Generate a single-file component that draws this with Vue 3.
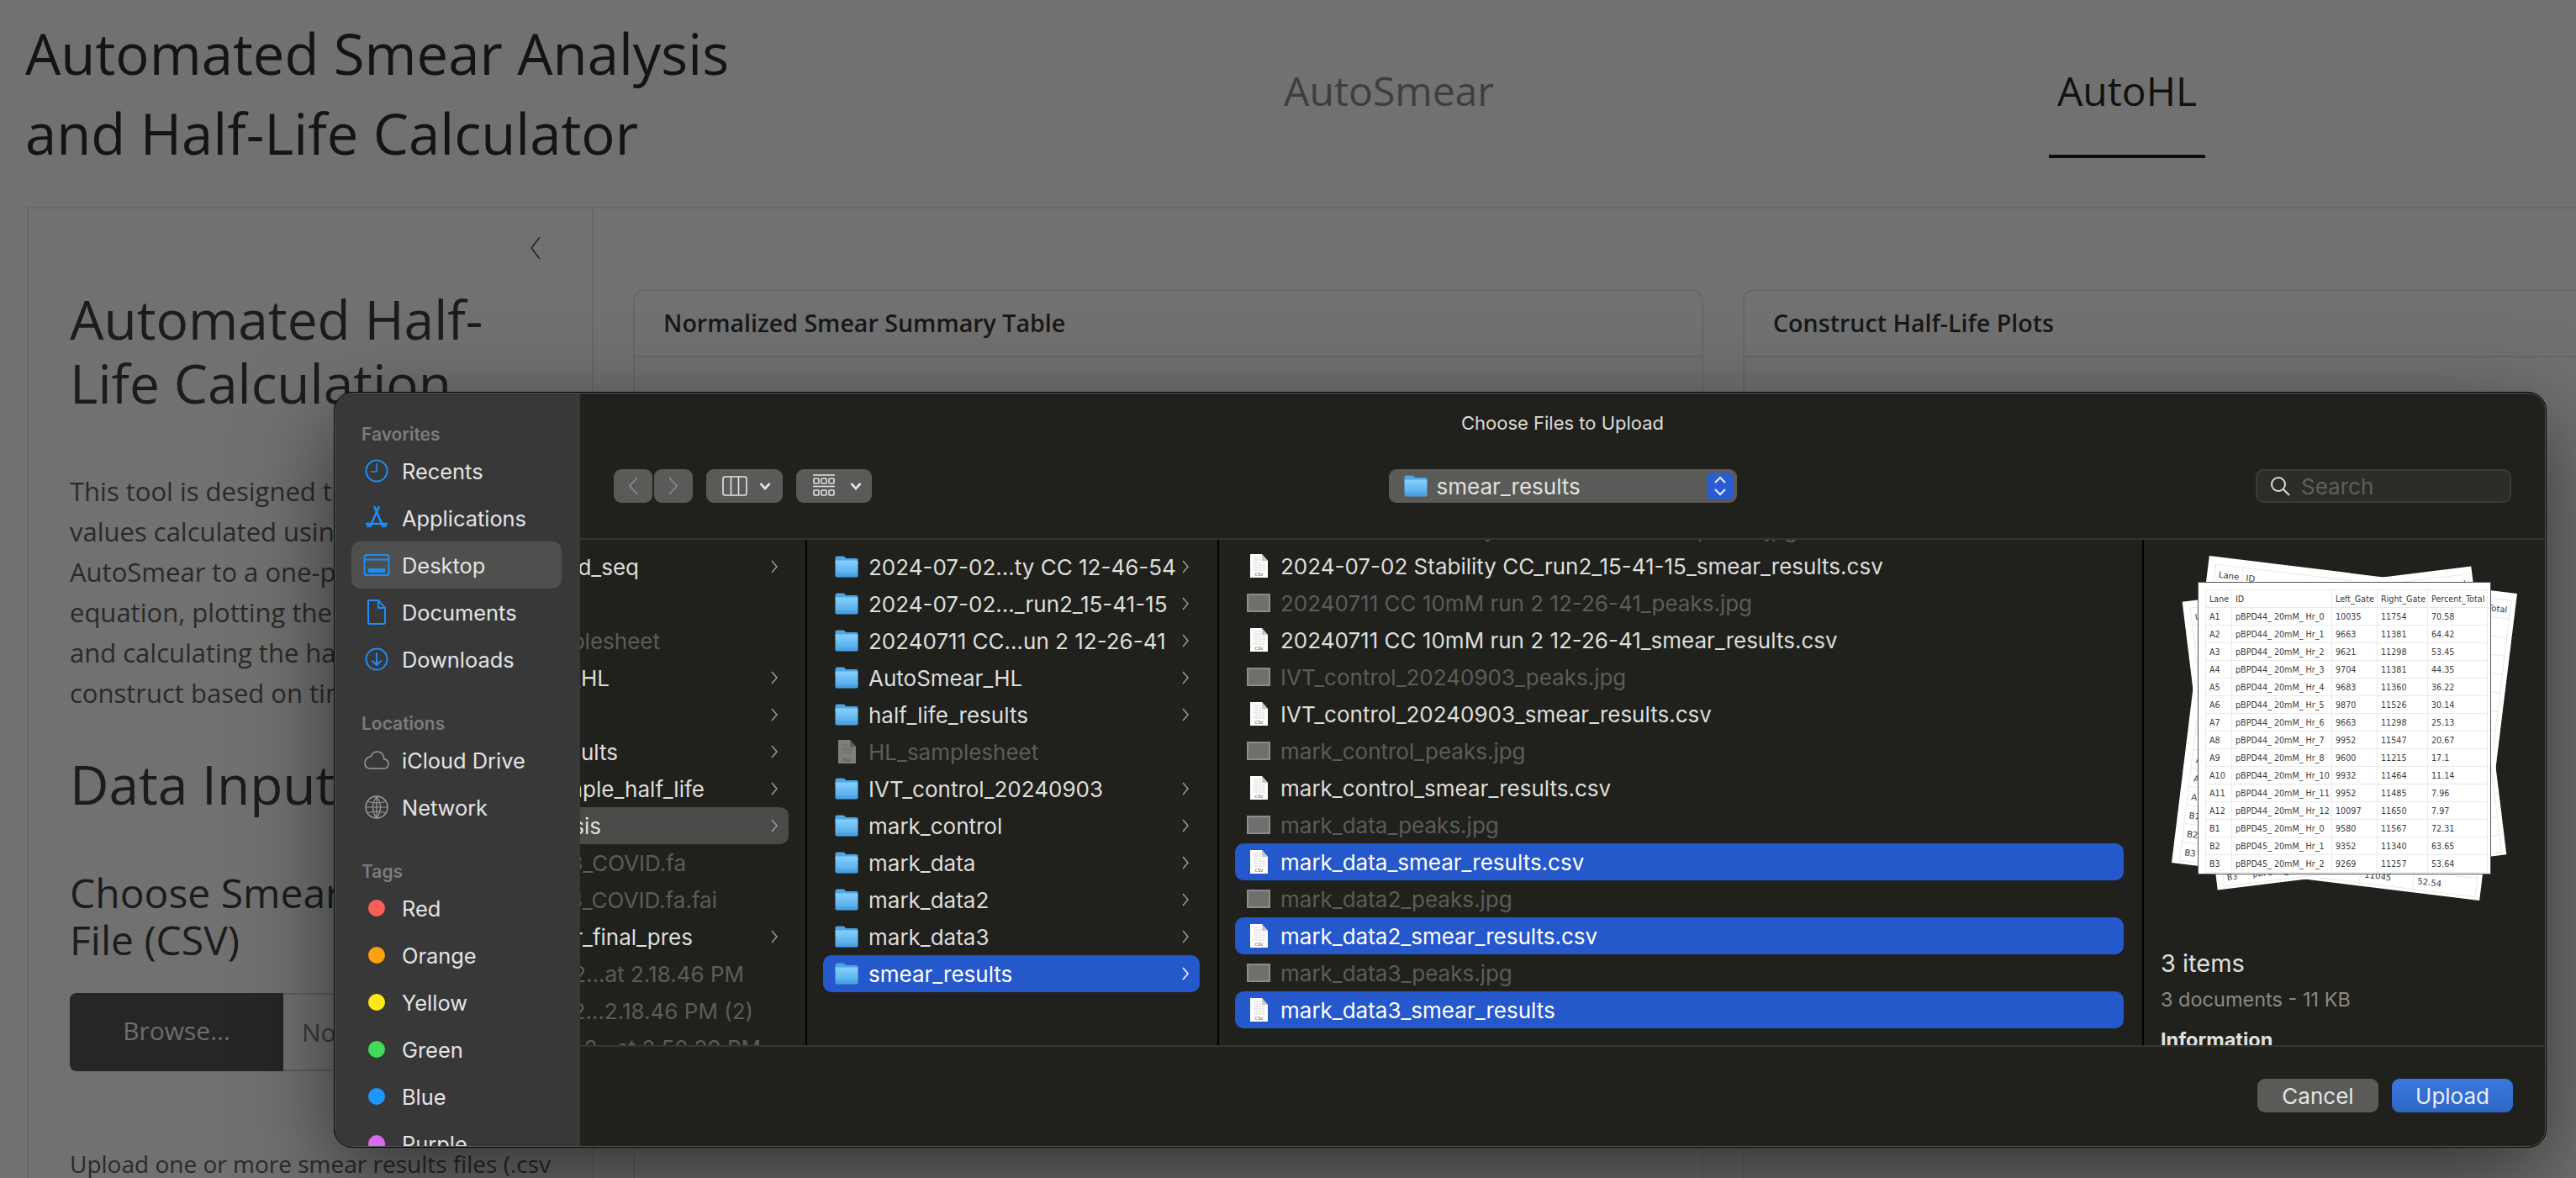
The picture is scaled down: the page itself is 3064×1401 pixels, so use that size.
<template>
  <div class="page">
    <svg class="defs" aria-hidden="true">
      <defs>
        <linearGradient id="fold" x1="0" y1="0" x2="0" y2="1">
          <stop offset="0" stop-color="#86cffb" />
          <stop offset="1" stop-color="#4aa6e8" />
        </linearGradient>
        <symbol id="folder" viewBox="0 0 28 26">
          <path d="M.5 3Q.5 .5 3 .5H9.5Q11 .5 12 1.6L13 3H25.5Q27.5 3 27.5 5V8H.5Z" fill="#4fa6e6" />
          <path d="M.5 5.5H25.5Q27.5 5.5 27.5 7.5V23.5Q27.5 25.5 25.5 25.5H2.5Q.5 25.5 .5 23.5Z" fill="url(#fold)" />
          <path d="M.5 22H27.5M.5 24H27.5" stroke="#3d8fd0" stroke-width=".6" />
        </symbol>
        <symbol id="csv" viewBox="0 0 23 28">
          <path d="M1 0H15L22 8V28H1Z" fill="#fff" />
          <path d="M15 0L22 8H15Z" fill="#c8c8c8" />
          <path d="M4 4H14M4 7H14M4 10H19M4 13H19M4 16H19M4 19H19M8 3V20M13 3V20M17 9V20" stroke="#dcdcdc" stroke-width=".8" />
          <text x="11.5" y="26" text-anchor="middle" class="ic-label">CSV</text>
        </symbol>
        <symbol id="tsv" viewBox="0 0 23 28">
          <path d="M1 0H15L22 8V28H1Z" fill="#7e7e7c" />
          <path d="M15 0L22 8H15Z" fill="#5c5c5a" />
          <path d="M4 6H13M4 9H19M4 12H19M4 15H19" stroke="#666" stroke-width=".8" />
          <text x="11.5" y="26" text-anchor="middle" class="ic-label">TSV</text>
        </symbol>
        <symbol id="jpg" viewBox="0 0 28 22">
          <rect width="28" height="22" fill="#8c8c8a" />
          <rect x="2" y="2" width="24" height="18" fill="#6f6f6d" />
        </symbol>
      </defs>
    </svg>

    <header class="top">
      <h1>Automated Smear Analysis<br />and Half-Life Calculator</h1>
      <nav class="tabs">
        <a class="tab">AutoSmear</a>
        <a class="tab active"><span>AutoHL</span></a>
      </nav>
    </header>

    <section class="shell">
      <aside class="side">
        <div class="collapse">
          <svg width="16" height="28" viewBox="0 0 16 28"><path d="M13 1L3 14L13 27" fill="none" stroke="#262626" stroke-width="1.6" /></svg>
        </div>
        <h2>Automated Half-Life Calculation</h2>
        <p class="lead">This tool is designed to fit half-life<br />values calculated using output from<br />AutoSmear to a one-phase decay<br />equation, plotting the decay curves<br />and calculating the half-life of each<br />construct based on time points.</p>
        <h2 class="data">Data Input</h2>
        <h3>Choose Smear Results<br />File (CSV)</h3>
        <div class="file">
          <span class="browse">Browse...</span>
          <span class="none">No file selected</span>
        </div>
        <p class="hint">Upload one or more smear results files (.csv</p>
      </aside>
      <div class="cards">
        <div class="card"><div class="card-head">Normalized Smear Summary Table</div></div>
        <div class="card"><div class="card-head">Construct Half-Life Plots</div></div>
      </div>
    </section>

    <div class="dialog">
      <aside class="places">
        <template v-for="g in places" :key="g.title">
          <div class="group">{{ g.title }}</div>
          <div v-for="p in g.items" :key="p.name" class="place" :class="{ on: p.name === 'Desktop' }">
            <span v-if="p.dot" class="dot" :style="{ background: p.dot }"></span>
            <svg v-else class="pic" :class="{ grey: g.title === 'Locations' }" viewBox="0 0 32 32" fill="none" stroke="currentColor" stroke-width="2">
              <template v-if="p.name === 'Recents'"><circle cx="16" cy="16" r="12.5" /><path d="M16 7V17H9" stroke-width="1.6" /></template>
              <template v-else-if="p.name === 'Applications'"><path d="M13 2L24 27M19 2L8 27M3 23H29" stroke-width="2.6" /><path d="M5 27L7 23M27 27L25 23" stroke-width="2.6" /></template>
              <template v-else-if="p.name === 'Desktop'"><rect x="1.5" y="4" width="29" height="24" rx="2.5" /><path d="M2 9.5H30" /><rect x="6" y="20" width="20" height="5" rx=".5" fill="currentColor" stroke="none" /></template>
              <template v-else-if="p.name === 'Documents'"><path d="M6 2H18L26 11V28Q26 30 24 30H8Q6 30 6 28Z" /><path d="M18 2V11H26" /></template>
              <template v-else-if="p.name === 'Downloads'"><circle cx="16" cy="16" r="12.5" /><path d="M16 8V23M10.5 17.5L16 23L21.5 17.5" /></template>
              <template v-else-if="p.name === 'iCloud Drive'"><path d="M9 26H24Q30 26 30 20.5Q30 15.5 25 15Q24 6 16.5 6Q11 6 9.5 11.5Q2 13 2 19.5Q2 26 9 26Z" stroke-width="1.5" /></template>
              <template v-else><circle cx="16" cy="16" r="13" stroke-width="1.5" /><path d="M16 3V29M3 16H29M5 9Q16 13 27 9M5 23Q16 19 27 23M16 3Q7 16 16 29M16 3Q25 16 16 29" stroke-width="1.2" /></template>
            </svg>
            <span>{{ p.name }}</span>
          </div>
        </template>
      </aside>

      <div class="main">
        <div class="toolbar">
          <div class="title">Choose Files to Upload</div>
          <div class="controls">
            <div class="tools">
              <div class="nav-pair">
                <span class="tbtn nav"><svg width="14" height="24" viewBox="0 0 14 24"><path d="M12 2L3 12L12 22" /></svg></span>
                <span class="tbtn nav"><svg width="14" height="24" viewBox="0 0 14 24"><path d="M2 2L11 12L2 22" /></svg></span>
              </div>
              <span class="tbtn drop">
                <svg class="view" width="30" height="24" viewBox="0 0 30 24"><rect x="1" y="1" width="28" height="22" rx="2.5" /><path d="M10.5 1V23M19.5 1V23" /></svg>
                <svg class="caret" width="14" height="10" viewBox="0 0 14 10"><path d="M1.5 2L7 8L12.5 2" /></svg>
              </span>
              <span class="tbtn drop grp">
                <svg class="view" width="28" height="28" viewBox="0 0 28 28"><path d="M1 1H27M1 14.5H27" /><rect x="2" y="5" width="6" height="6" rx="1" /><rect x="11" y="5" width="6" height="6" rx="1" /><rect x="20" y="5" width="6" height="6" rx="1" /><rect x="2" y="19" width="6" height="6" rx="1" /><rect x="11" y="19" width="6" height="6" rx="1" /><rect x="20" y="19" width="6" height="6" rx="1" /></svg>
                <svg class="caret" width="14" height="10" viewBox="0 0 14 10"><path d="M1.5 2L7 8L12.5 2" /></svg>
              </span>
            </div>
            <div class="popup">
              <svg class="folder-s" width="28" height="26"><use href="#folder" /></svg>
              <span class="popup-name">smear_results</span>
              <span class="stepper">
                <svg width="16" height="26" viewBox="0 0 16 26"><path d="M2 9L8 3L14 9M2 17L8 23L14 17" /></svg>
              </span>
            </div>
            <div class="search">
              <svg width="26" height="26" viewBox="0 0 26 26"><circle cx="11" cy="11" r="8" /><path d="M17 17L24 24" /></svg>
              <span>Search</span>
            </div>
          </div>
        </div>

        <div class="browser">
          <div class="col col-a">
            <div v-for="(r, i) in colA" :key="i" class="row" :class="{ dim: r.dim, here: r.here }">
              <span class="cut" :style="{ width: r.end - 689 + 'px' }">{{ r.name }}</span>
              <svg v-if="r.more" class="more" width="10" height="18" viewBox="0 0 10 18"><path d="M2 2L8 9L2 16" /></svg>
            </div>
          </div>
          <div class="col col-b">
            <div v-for="r in colB" :key="r.name" class="row" :class="{ dim: r.kind === 'tsv', sel: r.name === 'smear_results' }">
              <svg v-if="r.kind === 'tsv'" class="ico tsv" width="23" height="28"><use href="#tsv" /></svg>
              <svg v-else class="ico" width="28" height="26"><use href="#folder" /></svg>
              <span class="name">{{ r.name }}</span>
              <svg v-if="r.kind !== 'tsv'" class="more" width="10" height="18" viewBox="0 0 10 18"><path d="M2 2L8 9L2 16" /></svg>
            </div>
          </div>
          <div class="col col-c">
            <div v-for="r in colC" :key="r.name" class="row" :class="{ dim: r.kind === 'jpg', sel: r.sel }">
              <svg v-if="r.kind === 'jpg'" class="ico" width="28" height="22"><use href="#jpg" /></svg>
              <svg v-else class="ico doc" width="23" height="28"><use href="#csv" /></svg>
              <span class="name">{{ r.name }}</span>
            </div>
          </div>
          <div class="col preview">
            <div class="stack">
              <div v-for="(s, i) in sheets" :key="i" class="sheet" :class="s">
                <table>
                  <colgroup><col class="c1" /><col class="c2" /><col class="c3" /><col class="c4" /><col class="c5" /></colgroup>
                  <tbody>
                    <tr><td>Lane</td><td>ID</td><td>Left_Gate</td><td>Right_Gate</td><td>Percent_Total</td></tr>
                    <tr v-for="t in tableFor(s)" :key="t[0]"><td v-for="(c, j) in t" :key="j">{{ c }}</td></tr>
                    <tr><td></td><td></td><td></td><td></td><td></td></tr>
                  </tbody>
                </table>
              </div>
            </div>
            <div class="sum">3 items</div>
            <div class="kind">3 documents - 11 KB</div>
            <div class="info">Information</div>
          </div>
        </div>

        <div class="foot">
          <button class="btn">Cancel</button>
          <button class="btn primary">Upload</button>
        </div>
      </div>
    </div>
  </div>
</template>

<script setup>
const places = [
  { title: 'Favorites', items: [{ name: 'Recents' }, { name: 'Applications' }, { name: 'Desktop' }, { name: 'Documents' }, { name: 'Downloads' }] },
  { title: 'Locations', items: [{ name: 'iCloud Drive' }, { name: 'Network' }] },
  {
    title: 'Tags',
    items: [
      { name: 'Red', dot: '#fb5f57' },
      { name: 'Orange', dot: '#fd9f0e' },
      { name: 'Yellow', dot: '#fee714' },
      { name: 'Green', dot: '#3fdc58' },
      { name: 'Blue', dot: '#1e96fc' },
      { name: 'Purple', dot: '#d96bf0' },
    ],
  },
]

const colA = [
  { name: 'old_seq', end: 759, more: true },
  { name: '', end: 700 },
  { name: 'samplesheet', end: 784, dim: true },
  { name: 'AutoSmear_HL', end: 724, more: true },
  { name: '', end: 700, more: true },
  { name: 'results', end: 734, more: true },
  { name: 'sample_half_life', end: 837, more: true },
  { name: 'analysis', end: 714, more: true, here: true },
  { name: '3_COVID.fa', end: 815, dim: true },
  { name: '3_COVID.fa.fai', end: 852, dim: true },
  { name: 'r_final_pres', end: 823, more: true },
  { name: '2...at 2.18.46 PM', end: 884, dim: true },
  { name: '2...2.18.46 PM (2)', end: 895, dim: true },
  { name: '2...at 2.50.29 PM', end: 904, dim: true },
]

const colB = [
  { name: '2024-07-02...ty CC 12-46-54' },
  { name: '2024-07-02..._run2_15-41-15' },
  { name: '20240711 CC...un 2 12-26-41' },
  { name: 'AutoSmear_HL' },
  { name: 'half_life_results' },
  { name: 'HL_samplesheet', kind: 'tsv' },
  { name: 'IVT_control_20240903' },
  { name: 'mark_control' },
  { name: 'mark_data' },
  { name: 'mark_data2' },
  { name: 'mark_data3' },
  { name: 'smear_results' },
]

const colC = [
  { name: '2024-07-02 Stability CC_run2_15-41-15_peaks.jpg', kind: 'jpg' },
  { name: '2024-07-02 Stability CC_run2_15-41-15_smear_results.csv' },
  { name: '20240711 CC 10mM run 2 12-26-41_peaks.jpg', kind: 'jpg' },
  { name: '20240711 CC 10mM run 2 12-26-41_smear_results.csv' },
  { name: 'IVT_control_20240903_peaks.jpg', kind: 'jpg' },
  { name: 'IVT_control_20240903_smear_results.csv' },
  { name: 'mark_control_peaks.jpg', kind: 'jpg' },
  { name: 'mark_control_smear_results.csv' },
  { name: 'mark_data_peaks.jpg', kind: 'jpg' },
  { name: 'mark_data_smear_results.csv', sel: true },
  { name: 'mark_data2_peaks.jpg', kind: 'jpg' },
  { name: 'mark_data2_smear_results.csv', sel: true },
  { name: 'mark_data3_peaks.jpg', kind: 'jpg' },
  { name: 'mark_data3_smear_results', sel: true },
]

const table = [
  ['A1', 'pBPD44_ 20mM_ Hr_0', '10035', '11754', '70.58'],
  ['A2', 'pBPD44_ 20mM_ Hr_1', '9663', '11381', '64.42'],
  ['A3', 'pBPD44_ 20mM_ Hr_2', '9621', '11298', '53.45'],
  ['A4', 'pBPD44_ 20mM_ Hr_3', '9704', '11381', '44.35'],
  ['A5', 'pBPD44_ 20mM_ Hr_4', '9683', '11360', '36.22'],
  ['A6', 'pBPD44_ 20mM_ Hr_5', '9870', '11526', '30.14'],
  ['A7', 'pBPD44_ 20mM_ Hr_6', '9663', '11298', '25.13'],
  ['A8', 'pBPD44_ 20mM_ Hr_7', '9952', '11547', '20.67'],
  ['A9', 'pBPD44_ 20mM_ Hr_8', '9600', '11215', '17.1'],
  ['A10', 'pBPD44_ 20mM_ Hr_10', '9932', '11464', '11.14'],
  ['A11', 'pBPD44_ 20mM_ Hr_11', '9952', '11485', '7.96'],
  ['A12', 'pBPD44_ 20mM_ Hr_12', '10097', '11650', '7.97'],
  ['B1', 'pBPD45_ 20mM_ Hr_0', '9580', '11567', '72.31'],
  ['B2', 'pBPD45_ 20mM_ Hr_1', '9352', '11340', '63.65'],
  ['B3', 'pBPD45_ 20mM_ Hr_2', '9269', '11257', '53.64'],
]

const sheets = ['back-a', 'back-b', 'front']

// the two sheets behind come from another run, only the last row shows
function tableFor(sheet) {
  if (sheet === 'front') return table
  return [...table.slice(0, -1), ['B3', 'pBPD46_ 20mM_ Hr_2', '9269', '11045', '52.54']]
}
</script>

<style>
html,
body {
  margin: 0;
  background: #707070;
  overflow: hidden;
}
</style>

<style scoped>
* {
  box-sizing: border-box;
}

.page {
  position: relative;
  width: 3064px;
  height: 1401px;
  overflow: hidden;
  background: #717171;
  font-family: 'Open Sans', sans-serif;
  color: #141414;
}
.defs {
  position: absolute;
  width: 0;
  height: 0;
}
.ic-label {
  font-family: 'DejaVu Sans', sans-serif;
  font-size: 5px;
  fill: #444;
}

.top {
  display: flex;
  justify-content: space-between;
  height: 246px;
  padding: 16px 95px 0 30px;
}
.top h1 {
  margin: 0;
  font-size: 67px;
  font-weight: 400;
  line-height: 95px;
  white-space: nowrap;
}
.tabs {
  display: flex;
  height: 172px;
}
.tab {
  display: flex;
  justify-content: center;
  width: 878px;
  padding-top: 59px;
  font-size: 48px;
  line-height: 66px;
  color: #3e3e3e;
}
.tab.active {
  color: #111;
}
.tab.active span {
  height: 113px;
  padding: 0 10px;
  border-bottom: 4px solid #0d0d0d;
}

.shell {
  display: flex;
  width: 3300px;
  height: 1155px;
  margin-left: 32px;
  border: 2px solid #676767;
  border-right: 0;
  border-bottom: 0;
}
.side {
  flex: none;
  width: 672px;
  padding: 0 45px 0 49px;
  border-right: 2px solid #676767;
}
.collapse {
  display: flex;
  justify-content: flex-end;
  height: 94px;
  padding: 33px 14px 0 0;
}
.side h2 {
  margin: 0;
  font-size: 64px;
  font-weight: 400;
  line-height: 76px;
  color: #1c1c1c;
}
.lead {
  margin: 66px 0 0;
  font-size: 31px;
  line-height: 48px;
  color: #2a2a2a;
  white-space: nowrap;
}
.side h2.data {
  margin-top: 47px;
}
.side h3 {
  margin: 63px 0 0;
  font-size: 48px;
  font-weight: 400;
  line-height: 56px;
  color: #1c1c1c;
}
.file {
  display: flex;
  height: 93px;
  margin-top: 35px;
  font-size: 30px;
  line-height: 89px;
}
.browse {
  flex: none;
  width: 254px;
  border-radius: 8px 0 0 8px;
  background: #262626;
  color: #6e6e6e;
  text-align: center;
}
.none {
  flex: 1;
  padding-left: 22px;
  border: 2px solid #5f5f5f;
  border-left: 0;
  color: #3a3a3a;
}
.hint {
  margin: 86px 0 0;
  font-size: 28px;
  line-height: 48px;
  color: #2a2a2a;
  white-space: nowrap;
}

.cards {
  display: flex;
  gap: 47px;
  padding: 96px 0 0 47px;
}
.card {
  width: 1273px;
  height: 1100px;
  border: 2px solid #676767;
  border-radius: 14px;
}
.card-head {
  height: 79px;
  padding-left: 34px;
  border-bottom: 2px solid #676767;
  font-size: 28.6px;
  font-weight: 600;
  line-height: 75px;
  color: #181818;
}

.dialog {
  position: absolute;
  left: 397px;
  top: 466px;
  display: flex;
  width: 2632px;
  height: 899px;
  overflow: hidden;
  background: #20211c;
  border: 1px solid #050505;
  border-radius: 22px;
  box-shadow:
    inset 0 0 0 1px #55564f,
    0 34px 110px rgba(0, 0, 0, 0.55);
  font-family: Inter, sans-serif;
  font-size: 26px;
  color: #dededb;
}

.places {
  flex: none;
  width: 291px;
  margin: 1px 0 1px 1px;
  padding: 0 22px 0 19px;
  overflow: hidden;
  background: #383838;
  border-radius: 21px 0 0 21px;
  font-size: 25.4px;
}
.group {
  height: 30px;
  margin-left: 12px;
  font-size: 21px;
  font-weight: 600;
  line-height: 30px;
  color: #7c7c7c;
}
.group:first-child {
  margin-top: 34px;
}
.place + .group {
  margin-top: 34px;
}
.place {
  display: flex;
  align-items: center;
  height: 56px;
  padding-left: 14px;
  border-radius: 11px;
  color: #e4e4e4;
}
.place.on {
  background: #4f4f4e;
}
.pic {
  flex: none;
  width: 32px;
  height: 32px;
  margin-right: 14px;
  color: #1f8cf7;
}
.pic.grey {
  color: #9a9a9a;
}
.dot {
  flex: none;
  width: 20px;
  height: 20px;
  margin: 0 20px 0 6px;
  border-radius: 50%;
}

.main {
  flex: 1;
  display: flex;
  flex-direction: column;
  min-width: 0;
  margin: 1px 1px 1px 0;
}
.toolbar {
  flex: none;
  height: 174px;
  padding-top: 20px;
  border-bottom: 2px solid #33342f;
}
.title {
  height: 30px;
  font-size: 22px;
  line-height: 30px;
  text-align: center;
  color: #dcdcd9;
}
.controls {
  display: grid;
  grid-template-columns: 1fr auto 1fr;
  align-items: center;
  margin-top: 40px;
  padding: 0 40px;
}
.tools {
  display: flex;
  gap: 16px;
}
.nav-pair {
  display: flex;
  gap: 2px;
}
.tbtn {
  display: flex;
  align-items: center;
  height: 40px;
  border-radius: 9px;
  background: #5a5a58;
}
.tbtn svg {
  fill: none;
  stroke: #e4e4e2;
  stroke-width: 1.6;
}
.nav {
  justify-content: center;
  width: 46px;
}
.nav svg {
  stroke: #8c8c8a;
}
.drop {
  width: 91px;
  padding-left: 19px;
}
.grp {
  width: 90px;
}
.caret {
  margin-left: 14px;
  stroke-width: 2.6 !important;
}
.grp .caret {
  margin-left: 17px;
}
.popup {
  display: flex;
  align-items: center;
  width: 414px;
  height: 40px;
  padding: 0 4px 0 18px;
  border-radius: 9px;
  background: #5a5a58;
  color: #e2e2e0;
}
.folder-s {
  flex: none;
  margin-right: 11px;
}
.popup-name {
  flex: 1;
}
.stepper {
  display: flex;
  align-items: center;
  justify-content: center;
  width: 32px;
  height: 32px;
  border-radius: 7px;
  background: #2b5dd2;
}
.stepper svg {
  fill: none;
  stroke: #e8eeff;
  stroke-width: 2;
}
.search {
  display: flex;
  align-items: center;
  gap: 12px;
  justify-self: end;
  width: 304px;
  height: 40px;
  padding-left: 14px;
  border: 2px solid #3a3b36;
  border-radius: 9px;
  background: #2c2d29;
  color: #5f5f5c;
}
.search svg {
  fill: none;
  stroke: #dcdcda;
  stroke-width: 2;
}

.browser {
  flex: 1;
  display: flex;
  min-height: 0;
}
.col {
  flex: none;
  height: 100%;
  overflow: hidden;
  border-right: 2px solid #000;
}
.row {
  display: flex;
  align-items: center;
  height: 44px;
  white-space: nowrap;
}
.row.dim {
  color: #5c5c59;
}
.row.sel {
  border-radius: 10px;
  background: #2558cb;
  color: #fff;
}
.more {
  flex: none;
  fill: none;
  stroke: #9a9a98;
  stroke-width: 1.5;
}
.sel .more {
  stroke: #fff;
}
.ico {
  flex: none;
  margin-right: 12px;
}
.ico.tsv,
.ico.doc {
  margin: 0 14px 0 3px;
}
.name {
  flex: 1;
}

.col-a {
  width: 270px;
  padding-top: 10px;
}
.col-a .row {
  position: relative;
  width: 248px;
}
.col-a .row.here {
  border-radius: 0 10px 10px 0;
  background: #4a4a49;
}
.cut {
  display: flex;
  justify-content: flex-end;
  overflow: hidden;
}
.col-a .more {
  position: absolute;
  right: 12px;
}

.col-b {
  width: 490px;
  padding: 10px 21px 0 19px;
}
.col-b .row {
  padding: 0 12px 0 14px;
}

.col-c {
  width: 1100px;
  padding: 0 22px 0 19px;
}
.col-c .row {
  padding: 0 0 0 14px;
}
.col-c .row:first-child {
  margin-top: -35px;
}

.preview {
  flex: 1;
  padding-left: 20px;
  border-right: 0;
}
.stack {
  display: grid;
  place-items: center;
  height: 348px;
  margin: 50px 0 0 -20px;
}
.sheet {
  grid-area: 1 / 1;
  width: 349px;
  height: 348px;
  padding: 8px 0 0 8px;
  overflow: hidden;
  background: #fff;
  border: 1px solid #555;
}
.sheet.front {
  z-index: 1;
}
.sheet.back-a {
  border: 0;
  transform: rotate(7deg) scale(1.057);
}
.sheet.back-b {
  border: 0;
  transform: rotate(-7deg) scale(0.992);
}
.sheet table {
  width: 335px;
  table-layout: fixed;
  border-collapse: collapse;
  font-family: 'DejaVu Sans', sans-serif;
  font-size: 9.6px;
  color: #3c3c3c;
}
.c1 {
  width: 31px;
}
.c2 {
  width: 119px;
}
.c3 {
  width: 54px;
}
.c4 {
  width: 60px;
}
.c5 {
  width: 71px;
}
.sheet td {
  height: 21px;
  padding: 0 0 0 4px;
  overflow: hidden;
  border: 1px solid #e9e9e9;
  white-space: nowrap;
}
.sum {
  margin-top: 86px;
  font-size: 29px;
  line-height: 40px;
  color: #e0e0de;
}
.kind {
  margin-top: 6px;
  font-size: 23.5px;
  line-height: 34px;
  color: #8a8a88;
}
.info {
  margin-top: 14px;
  font-size: 23.5px;
  font-weight: 700;
  line-height: 34px;
  color: #e0e0de;
}

.foot {
  flex: none;
  display: flex;
  justify-content: flex-end;
  gap: 16px;
  height: 120px;
  padding: 38px 38px 0 0;
  border-top: 2px solid #33342f;
}
.btn {
  width: 144px;
  height: 40px;
  padding: 0;
  border: 0;
  border-radius: 9px;
  background: #5a5a58;
  font-family: Inter, sans-serif;
  font-size: 26px;
  color: #e6e6e4;
}
.btn.primary {
  background: linear-gradient(#3a78de, #2f66c4);
  color: #e6eeff;
}
</style>
